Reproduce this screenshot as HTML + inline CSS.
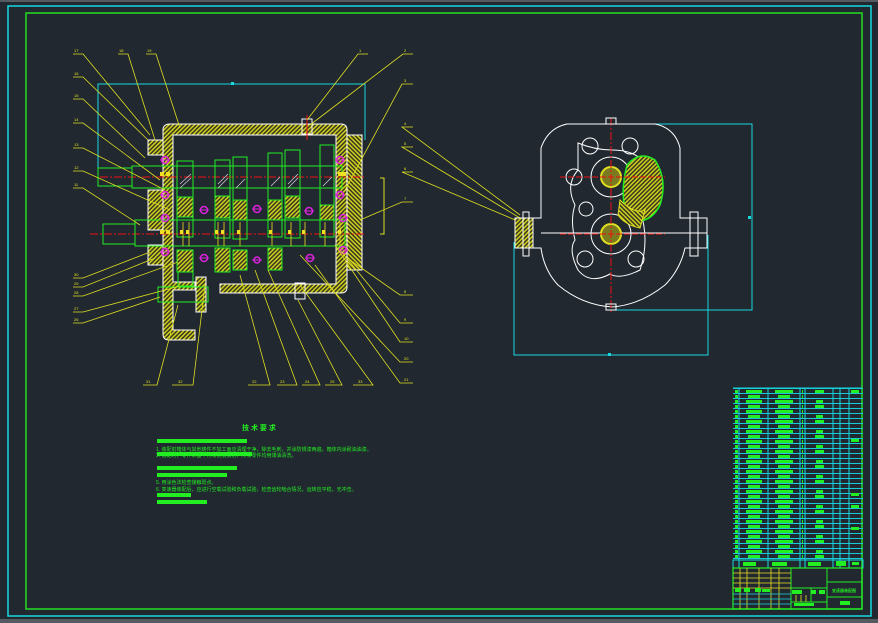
<!DOCTYPE html>
<html><head><meta charset="utf-8"><style>
html,body{margin:0;padding:0;background:#212830;}
svg{display:block;font-family:"Liberation Sans","Noto Sans CJK SC",sans-serif;}
</style></head><body>
<svg width="878" height="623" viewBox="0 0 878 623" xmlns="http://www.w3.org/2000/svg">
<defs>
<pattern id="h" width="3" height="3" patternUnits="userSpaceOnUse" patternTransform="rotate(45)"><rect width="3" height="3" fill="#3a3a20"/><rect width="1.4" height="3" fill="#d8d820"/></pattern>
<pattern id="h2" width="3" height="3" patternUnits="userSpaceOnUse" patternTransform="rotate(-45)"><rect width="3" height="3" fill="#3a3a20"/><rect width="1.4" height="3" fill="#d8d820"/></pattern>
<pattern id="rows" width="10" height="5" patternUnits="userSpaceOnUse" y="388"><rect width="10" height="1" fill="#18c8d8"/></pattern>
<pattern id="g1" width="40" height="10" patternUnits="userSpaceOnUse" x="739" y="389"><rect x="7" y="1" width="16" height="3" fill="#22ee22"/><rect x="9" y="6" width="12" height="3" fill="#22ee22"/></pattern>
<pattern id="g2" width="40" height="10" patternUnits="userSpaceOnUse" x="768" y="389"><rect x="7" y="1" width="18" height="3" fill="#22ee22"/><rect x="10" y="6" width="12" height="3" fill="#22ee22"/></pattern>
<pattern id="g3" width="40" height="15" patternUnits="userSpaceOnUse" x="805" y="389"><rect x="10" y="1" width="9" height="3" fill="#22ee22"/><rect x="11" y="11" width="7" height="3" fill="#22ee22"/></pattern>
<pattern id="g0" width="10" height="5" patternUnits="userSpaceOnUse" x="733" y="389"><rect x="2" y="1" width="3" height="3" fill="#22ee22"/></pattern>
</defs>
<rect width="878" height="623" fill="#212830"/>
<rect x="0" y="0" width="878" height="2" fill="#555a60"/>
<rect x="0" y="619" width="878" height="4" fill="#555a60"/>
<rect x="8" y="6" width="863" height="610" fill="none" stroke="#18d8e0" stroke-width="1.5"/>
<rect x="26" y="13" width="836" height="596" fill="none" stroke="#22dd22" stroke-width="1.5"/>

<polyline points="98,170 98,84 365,84 365,140" fill="none" stroke="#18d8e0"/>
<rect x="231" y="82" width="3" height="3" fill="#18d8e0"/>
<polyline points="380,178 384,178 384,234 380,234" fill="none" stroke="#e0e020"/>

<path d="M170,124 H341 Q347,124 347,130 V287 Q347,293 341,293 H220 V284 H336 V135 H173 V282 H195 V290 H173 V330 H195 V340 H169 Q163,340 163,334 V130 Q163,124 170,124Z" fill="url(#h)" stroke="#fff" stroke-width="1"/>
<rect x="347" y="135" width="15" height="135" fill="url(#h2)" stroke="#fff"/>
<rect x="148" y="140" width="15" height="15" fill="url(#h)" stroke="#fff"/>
<rect x="148" y="190" width="15" height="40" fill="url(#h)" stroke="#fff"/>
<rect x="148" y="245" width="15" height="20" fill="url(#h)" stroke="#fff"/>
<rect x="302" y="119" width="10" height="15" fill="none" stroke="#fff"/>
<rect x="295" y="283" width="10" height="16" fill="none" stroke="#fff"/>
<rect x="196" y="277" width="10" height="35" fill="url(#h)" stroke="#fff"/>

<line x1="100" y1="177" x2="365" y2="177" stroke="#ee1111" stroke-dasharray="8,2,2,2"/>
<line x1="90" y1="234" x2="365" y2="234" stroke="#ee1111" stroke-dasharray="8,2,2,2"/>
<line x1="307" y1="115" x2="307" y2="140" stroke="#ee1111"/>

<rect x="98" y="168" width="34" height="18" fill="none" stroke="#22ee22"/>
<rect x="132" y="166" width="210" height="22" fill="none" stroke="#22ee22"/>
<rect x="103" y="224" width="32" height="20" fill="none" stroke="#22ee22"/>
<rect x="135" y="220" width="210" height="26" fill="none" stroke="#22ee22"/>
<g fill="none" stroke="#22ee22">
<rect x="177" y="161" width="16" height="76"/>
<rect x="215" y="160" width="15" height="78"/>
<rect x="233" y="157" width="14" height="82"/>
<rect x="268" y="153" width="14" height="84"/>
<rect x="285" y="150" width="15" height="88"/>
<rect x="320" y="145" width="14" height="92"/>
<rect x="178" y="266" width="15" height="20"/>
<rect x="158" y="287" width="50" height="15"/>
</g>
<g fill="url(#h)" stroke="#22ee22">
<rect x="177" y="197" width="16" height="20"/>
<rect x="215" y="196" width="15" height="22"/>
<rect x="233" y="200" width="14" height="20"/>
<rect x="268" y="200" width="14" height="20"/>
<rect x="285" y="196" width="15" height="22"/>
<rect x="320" y="205" width="14" height="15"/>
<rect x="177" y="250" width="16" height="22"/>
<rect x="215" y="248" width="15" height="24"/>
<rect x="233" y="250" width="14" height="20"/>
<rect x="268" y="248" width="14" height="22"/>
</g>
<g stroke="#ccc" stroke-width="0.8">
<path d="M180,188 L191,178 M180,184 L191,174 M218,188 L228,178 M218,184 L228,174 M236,188 L245,179 M271,186 L280,177 M288,188 L298,178 M288,184 L298,174 M323,186 L332,177"/>
</g>
<g fill="none" stroke="#dd22dd" stroke-width="1.5">
<circle cx="165" cy="160" r="3.5"/><circle cx="165" cy="195" r="3.5"/><circle cx="165" cy="218" r="3.5"/><circle cx="165" cy="252" r="3.5"/>
<circle cx="340" cy="160" r="3.5"/><circle cx="340" cy="195" r="3.5"/><circle cx="343" cy="218" r="3.5"/><circle cx="343" cy="250" r="3.5"/>
<circle cx="204" cy="210" r="3.5"/><circle cx="204" cy="258" r="3.5"/><circle cx="257" cy="209" r="3.5"/><circle cx="257" cy="260" r="3"/><circle cx="309" cy="211" r="3.5"/><circle cx="310" cy="258" r="3.5"/>
</g>
<g stroke="#dd22dd" stroke-width="1"><path d="M160,160 h10 M160,195 h10 M160,218 h10 M160,252 h10 M335,160 h10 M335,195 h10 M338,218 h10 M338,250 h10 M199,210 h10 M199,258 h10 M252,209 h10 M252,260 h10 M304,211 h10 M305,258 h10"/></g>
<g fill="#f0e020">
<rect x="160" y="172" width="4" height="4"/><rect x="166" y="172" width="4" height="4"/><rect x="160" y="230" width="4" height="4"/><rect x="166" y="230" width="4" height="4"/>
<rect x="180" y="230" width="3" height="4"/><rect x="186" y="230" width="3" height="4"/><rect x="215" y="230" width="3" height="4"/><rect x="221" y="230" width="3" height="4"/><rect x="237" y="230" width="3" height="4"/><rect x="269" y="230" width="3" height="4"/><rect x="288" y="230" width="3" height="4"/><rect x="302" y="230" width="3" height="4"/><rect x="322" y="230" width="3" height="4"/><rect x="338" y="230" width="3" height="4"/>
<rect x="338" y="172" width="4" height="4"/><rect x="342" y="172" width="4" height="4"/>
</g>
<g stroke="#f0e020" stroke-width="0.8"><path d="M183,222 V246 M189,222 V246 M218,222 V246 M224,222 V246 M240,222 V246 M272,222 V246 M291,222 V246 M305,222 V246 M325,222 V246 M340,222 V246"/></g>

<g stroke="#e0e020" stroke-width="0.8" fill="none">
<path d="M73,54 H83 L150,135 M73,77 H83 L148,140 M73,99 H83 L145,158 M73,123 H83 L160,180 M73,148 H83 L165,190 M73,171 H83 L170,210 M73,188 H83 L140,225"/>
<path d="M118,54 H128 L155,140 M146,54 H156 L180,128"/>
<path d="M368,54 H358 L307,120 M413,54 H403 L310,125 M413,84 H402 L345,190 M413,295 H400 L350,260 M413,323 H400 L340,250 M413,342 H400 L335,245 M413,362 H400 L300,255 M413,383 H400 L315,265"/>
<path d="M413,127 H402 L520,215 M413,147 H402 L520,218 M413,172 H402 L520,222 M413,202 H402 L360,220"/>
<path d="M73,278 H83 L150,252 M73,287 H83 L155,258 M73,296 H83 L178,262 M73,312 H83 L180,286 M73,323 H83 L160,297"/>
<path d="M143,385 H157 L178,305 M172,385 H193 L205,285 M248,385 H270 L240,275 M277,385 H297 L255,270 M302,385 H320 L268,270 M325,385 H342 L298,300 M353,385 H373 L300,285"/>
</g>
<g fill="#e0e020" font-size="4">
<text x="74" y="52">17</text><text x="74" y="75">16</text><text x="74" y="97">15</text><text x="74" y="121">14</text><text x="74" y="146">13</text><text x="74" y="169">12</text><text x="74" y="186">11</text>
<text x="119" y="52">18</text><text x="147" y="52">19</text><text x="359" y="52">1</text><text x="404" y="52">2</text><text x="404" y="82">3</text>
<text x="404" y="125">4</text><text x="404" y="145">5</text><text x="404" y="170">6</text><text x="404" y="200">7</text><text x="404" y="293">8</text><text x="404" y="321">9</text><text x="404" y="340">10</text><text x="404" y="360">20</text><text x="404" y="381">21</text>
<text x="74" y="276">30</text><text x="74" y="285">29</text><text x="74" y="294">28</text><text x="74" y="310">27</text><text x="74" y="321">26</text>
<text x="146" y="383">31</text><text x="178" y="383">32</text><text x="252" y="383">22</text><text x="280" y="383">23</text><text x="305" y="383">24</text><text x="330" y="383">25</text><text x="358" y="383">33</text>
</g>

<polyline points="612,124 752,124 752,310 612,310" fill="none" stroke="#18d8e0"/>
<rect x="748" y="216" width="3" height="3" fill="#18d8e0"/>
<polyline points="514,242 514,355 708,355 708,235" fill="none" stroke="#18d8e0"/>
<rect x="608" y="353" width="3" height="3" fill="#18d8e0"/>
<path d="M567,124 H655 Q675,128 680,148 V218 H707 V248 H685 Q680,270 665,285 Q640,305 612,307 Q582,305 558,285 Q544,270 541,248 H520 V218 H541 V148 Q548,128 567,124Z" fill="none" stroke="#fff"/>
<path d="M578,143 Q595,150 612,150 Q632,150 642,160 Q650,190 640,210 Q650,240 640,270 Q620,280 610,274 Q590,285 578,270 Q568,250 575,240 Q570,220 575,205 Q565,185 578,170 Z" fill="none" stroke="#fff"/>
<line x1="541" y1="233" x2="707" y2="233" stroke="#fff"/>
<g fill="none" stroke="#fff">
<circle cx="590" cy="146" r="8"/><circle cx="630" cy="146" r="8"/><circle cx="574" cy="177" r="8"/><circle cx="586" cy="209" r="7"/><circle cx="585" cy="259" r="8"/><circle cx="636" cy="259" r="8"/>
<circle cx="611" cy="177" r="20"/><circle cx="611" cy="234" r="20"/>
</g>
<circle cx="611" cy="177" r="10" fill="#7a7a20" stroke="#e0e020" stroke-width="2"/>
<circle cx="611" cy="234" r="10" fill="#7a7a20" stroke="#e0e020" stroke-width="2"/>
<path d="M627,165 Q640,150 655,160 Q668,180 660,205 Q650,225 630,220 Q618,200 627,165Z" fill="url(#h)" stroke="#22ee22" stroke-width="1.5"/>
<path d="M620,200 Q635,215 645,210 L640,228 Q625,225 618,215Z" fill="url(#h2)" stroke="#e0e020"/>
<line x1="611" y1="118" x2="611" y2="312" stroke="#ee1111" stroke-dasharray="8,2,2,2"/>
<line x1="560" y1="177" x2="665" y2="177" stroke="#ee1111" stroke-dasharray="6,2"/>
<line x1="560" y1="234" x2="665" y2="234" stroke="#ee1111" stroke-dasharray="6,2"/>
<rect x="515" y="218" width="18" height="30" fill="url(#h)" stroke="#fff"/>
<rect x="523" y="212" width="6" height="44" fill="none" stroke="#fff"/>
<rect x="690" y="212" width="8" height="44" fill="none" stroke="#fff"/>
<rect x="606" y="118" width="10" height="6" fill="none" stroke="#fff"/>
<rect x="606" y="304" width="10" height="6" fill="none" stroke="#fff"/>

<text x="242" y="430" fill="#22ee22" font-size="7" font-weight="bold">技 术 要 求</text>
<g fill="#22ee22">
<rect x="157" y="439" width="90" height="4"/>
<rect x="157" y="452" width="95" height="4"/>
<rect x="157" y="466" width="80" height="4"/>
<rect x="157" y="473" width="70" height="4"/>
<rect x="157" y="493" width="34" height="4"/>
<rect x="157" y="500" width="50" height="4"/>
</g>
<g fill="#22ee22" font-size="5">
<text x="156" y="451">1. 装配前箱体与其他铸件不加工面应清理干净，除去毛刺，并涂防锈漆两遍，箱体内涂耐油油漆。</text>
<text x="156" y="457">2. 装配时，零件表面不得有划痕损伤，所有零件均用煤油清洗。</text>
<text x="156" y="484">5. 用涂色法检查接触斑点。</text>
<text x="156" y="491">6. 变速器装配后，应进行空载试验和负载试验，检查齿轮啮合情况，运转应平稳，无冲击。</text>
</g>

<rect x="733" y="388" width="130" height="172" fill="url(#rows)"/>
<rect x="733" y="388" width="6" height="172" fill="url(#g0)"/>
<rect x="739" y="388" width="29" height="172" fill="url(#g1)"/>
<rect x="768" y="388" width="32" height="172" fill="url(#g2)"/>
<rect x="805" y="388" width="28" height="172" fill="url(#g3)"/>
<g stroke="#18d8e0" stroke-width="1"><path d="M733,388 H862 M739,388 V568 M768,388 V568 M800,388 V568 M805,388 V568 M833,388 V568 M840,388 V568 M849,388 V568"/></g>
<line x1="802.5" y1="390" x2="802.5" y2="560" stroke="#22ee22" stroke-dasharray="3,2"/>
<g fill="#22ee22"><rect x="851" y="390" width="8" height="3"/><rect x="851" y="439" width="8" height="3"/><rect x="851" y="493" width="8" height="3"/><rect x="851" y="505" width="8" height="3"/><rect x="851" y="527" width="8" height="3"/></g>
<rect x="733" y="560" width="130" height="8" fill="none" stroke="#18d8e0"/>
<g fill="#22ee22"><rect x="743" y="562" width="13" height="4"/><rect x="772" y="562" width="15" height="4"/><rect x="808" y="562" width="13" height="4"/><rect x="836" y="561" width="10" height="5"/><rect x="852" y="562" width="7" height="3"/></g>
<rect x="733" y="568" width="129" height="41" fill="none" stroke="#22ee22" stroke-width="1.2"/>
<g stroke="#22ee22"><path d="M791,568 V609 M827,568 V609 M827,582 H862 M827,597 H862 M791,588 H827 M791,602 H827 M811,588 V602"/></g>
<g stroke="#e8e020" stroke-width="0.8"><path d="M733,573 H791 M733,578 H791 M733,583 H791 M733,588 H791 M740,568 V609 M747,568 V609 M759,568 V609 M771,568 V609 M779,568 V609 M796,595 V602 M801,595 V602 M806,595 V602"/></g>
<g stroke="#18d8e0" stroke-width="0.8"><path d="M733,594 H791 M733,599 H791 M733,604 H791"/></g>
<g fill="#22ee22"><rect x="735" y="588" width="6" height="4"/><rect x="744" y="588" width="6" height="4"/><rect x="755" y="588" width="6" height="4"/><rect x="762" y="589" width="8" height="3"/><rect x="792" y="590" width="10" height="4"/><rect x="811" y="590" width="5" height="4"/><rect x="819" y="590" width="6" height="4"/><rect x="794" y="603" width="20" height="3"/><rect x="840" y="601" width="10" height="4"/></g>
<text x="832" y="592" fill="#22ee22" font-size="4" font-weight="bold">变速器装配图</text>
</svg>
</body></html>
